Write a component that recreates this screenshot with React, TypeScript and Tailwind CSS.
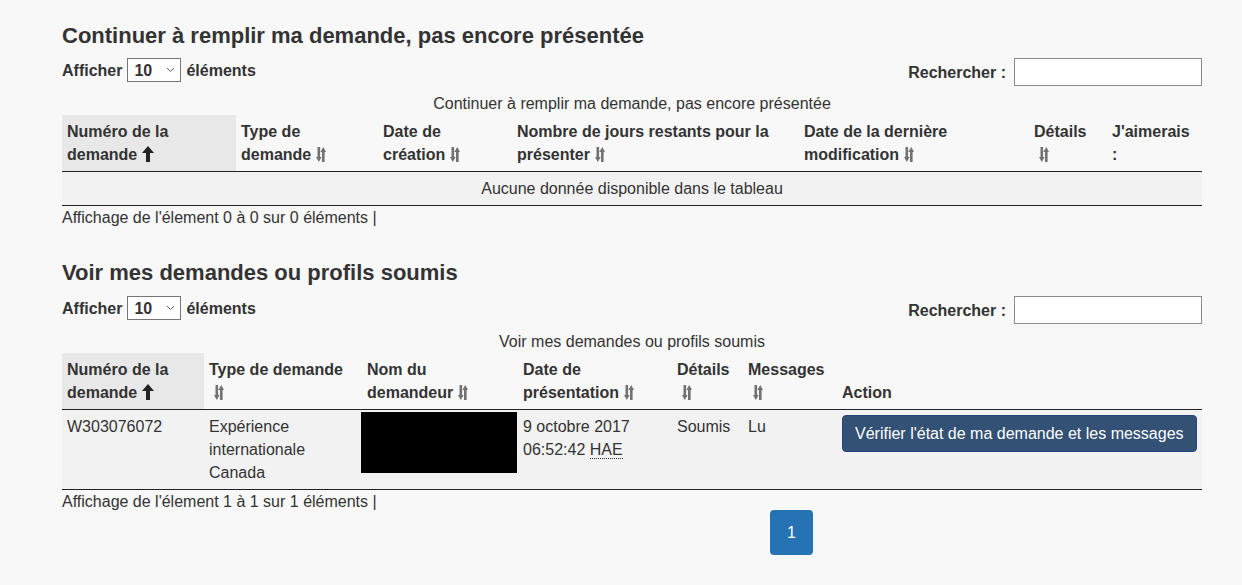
import React from 'react';

const SortIcon: React.FC = () => (
  <svg width="10" height="15" viewBox="0 0 10 15" className="inline-block ml-[5px] -mt-[3px] align-middle">
    <rect x="1.5" y="0" width="2.6" height="11" fill="#727272" />
    <polygon points="0,10 5.6,10 2.8,15" fill="#727272" />
    <rect x="6" y="4" width="2.6" height="11" fill="#727272" />
    <polygon points="4.3,5 10,5 7.3,0" fill="#727272" />
  </svg>
);

const SortUp: React.FC = () => (
  <svg width="12" height="16" viewBox="0 0 12 16" className="inline-block ml-[5px] -mt-[3px] align-middle">
    <polygon points="6,0 12,7 8,7 8,16 4,16 4,7 0,7" fill="#222" />
  </svg>
);

const Controls: React.FC = () => (
  <div className="flex justify-between items-start">
    <div className="flex items-center h-[24px] font-bold">
      <span>Afficher</span>
      <div className="mx-[5px] w-[54px] h-[24px] border border-[#767676] bg-white flex items-center justify-between pl-[6px] pr-[5px]">
        <span>10</span>
        <svg width="9" height="6" viewBox="0 0 9 6">
          <polyline points="1,1 4.5,4.5 8,1" fill="none" stroke="#666" strokeWidth="1" />
        </svg>
      </div>
      <span>éléments</span>
    </div>
    <div className="flex items-center font-bold">
      <span>Rechercher :</span>
      <div className="ml-[8px] w-[188px] h-[28px] border border-[#8c8c8c] bg-white" />
    </div>
  </div>
);

type Head = { lines: React.ReactNode[]; icon?: 'up' | 'sort'; width: number; sorted?: boolean };

const HeaderCell: React.FC<{ h: Head }> = ({ h }) => (
  <th
    className={`text-left align-bottom font-bold px-[5px] py-[5px] ${h.sorted ? 'bg-[#e8e8e8]' : ''}`}
    style={{ width: h.width }}
  >
    {h.lines.map((l, i) => (
      <React.Fragment key={i}>
        {i > 0 && <br />}
        {l}
      </React.Fragment>
    ))}
    {h.icon === 'up' && <SortUp />}
    {h.icon === 'sort' && <SortIcon />}
  </th>
);

const table1Heads: Head[] = [
  { lines: ['Numéro de la', 'demande'], icon: 'up', width: 174, sorted: true },
  { lines: ['Type de', 'demande'], icon: 'sort', width: 142 },
  { lines: ['Date de', 'création'], icon: 'sort', width: 134 },
  { lines: ['Nombre de jours restants pour la', 'présenter'], icon: 'sort', width: 287 },
  { lines: ['Date de la dernière', 'modification'], icon: 'sort', width: 230 },
  { lines: ['Détails', ''], icon: 'sort', width: 78 },
  { lines: ["J'aimerais", ':'], width: 95 },
];

const table2Heads: Head[] = [
  { lines: ['Numéro de la', 'demande'], icon: 'up', width: 142, sorted: true },
  { lines: ['Type de demande', ''], icon: 'sort', width: 158 },
  { lines: ['Nom du', 'demandeur'], icon: 'sort', width: 156 },
  { lines: ['Date de', 'présentation'], icon: 'sort', width: 154 },
  { lines: ['Détails', ''], icon: 'sort', width: 71 },
  { lines: ['Messages', ''], icon: 'sort', width: 94 },
  { lines: ['Action'], width: 365 },
];

export default function App() {
  return (
    <div
      className="min-h-[585px] bg-[#f8f8f8] text-[#333] text-[16px] leading-[23px]"
      style={{ fontFamily: '"Liberation Sans", Arial, sans-serif' }}
    >
      <div className="ml-[62px] w-[1140px] pt-[24px]">
        {/* section 1 */}
        <h2 className="text-[22px] leading-[24px] font-bold mb-[10px]">
          Continuer à remplir ma demande, pas encore présentée
        </h2>
        <Controls />
        <table className="w-full table-fixed border-collapse mt-[6px]">
          <caption className="text-center h-[23px]">Continuer à remplir ma demande, pas encore présentée</caption>
          <thead>
            <tr className="border-b border-[#222]">
              {table1Heads.map((h, i) => (
                <HeaderCell key={i} h={h} />
              ))}
            </tr>
          </thead>
          <tbody>
            <tr className="bg-[#f2f2f2] border-b border-[#222]">
              <td colSpan={7} className="text-center px-[5px] py-[5px]">
                Aucune donnée disponible dans le tableau
              </td>
            </tr>
          </tbody>
        </table>
        <div>Affichage de l'élement 0 à 0 sur 0 éléments |</div>

        {/* section 2 */}
        <h2 className="text-[22px] leading-[24px] font-bold mt-[32px] mb-[11px]">
          Voir mes demandes ou profils soumis
        </h2>
        <Controls />
        <table className="w-full table-fixed border-collapse mt-[6px]">
          <caption className="text-center h-[23px]">Voir mes demandes ou profils soumis</caption>
          <thead>
            <tr className="border-b border-[#222]">
              {table2Heads.map((h, i) => (
                <HeaderCell key={i} h={h} />
              ))}
            </tr>
          </thead>
          <tbody>
            <tr className="bg-[#f2f2f2] border-b border-[#222] align-top">
              <td className="px-[5px] py-[5px]">W303076072</td>
              <td className="px-[5px] py-[5px]">
                Expérience
                <br />
                internationale
                <br />
                Canada
              </td>
              <td className="px-0 pt-[2px] pb-[5px]">
                <div className="w-[156px] h-[61px] -ml-[1px] bg-black" />
              </td>
              <td className="px-[5px] py-[5px]">
                9 octobre 2017
                <br />
                06:52:42{' '}
                <abbr className="no-underline border-b border-dotted border-[#333]" title="Heure avancée de l'Est">
                  HAE
                </abbr>
              </td>
              <td className="px-[5px] py-[5px]">Soumis</td>
              <td className="px-[5px] py-[5px]">Lu</td>
              <td className="px-[5px] py-[5px]">
                <button className="bg-[#335075] border border-[#2b4380] text-white rounded-[4px] px-[12px] py-[6px] leading-[23px] whitespace-nowrap">
                  Vérifier l'état de ma demande et les messages
                </button>
              </td>
            </tr>
          </tbody>
        </table>
        <div>Affichage de l'élement 1 à 1 sur 1 éléments |</div>
        <div className="flex -mt-[3px] ml-[708px]">
          <div className="w-[43px] h-[45px] rounded-[4px] bg-[#2572b4] text-white flex items-center justify-center">
            1
          </div>
        </div>
      </div>
    </div>
  );
}
